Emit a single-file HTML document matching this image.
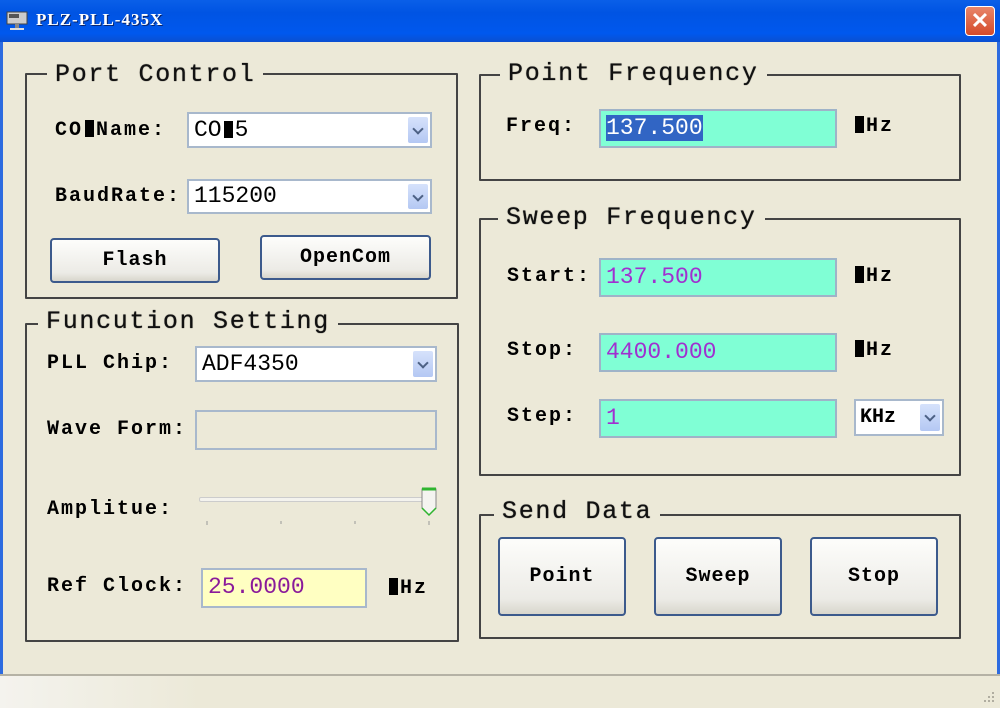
<!DOCTYPE html>
<html><head><meta charset="utf-8"><style>
*{margin:0;padding:0;box-sizing:border-box}
body{width:1000px;height:708px;overflow:hidden;background:#ECE9D8;position:relative;font-family:"Liberation Mono",monospace;font-weight:bold;color:#000}
.a{position:absolute}
.tb{left:0;top:0;width:1000px;height:42px;background:linear-gradient(#0A5FE8,#0054E3 30%,#0058EE 80%,#0A4FD0)}
.grp{position:absolute;border:2px solid #444;border-radius:1px}
.gt{position:absolute;background:#ECE9D8;font-size:25px;font-weight:normal;color:#111;padding:0 8px;letter-spacing:1.7px;line-height:28px;font-family:"Liberation Mono",monospace;text-shadow:0 0 0.8px #000}
.lb{position:absolute;font-size:20px;letter-spacing:2px;line-height:24px}
.box{position:absolute;border:2px solid #A8B8CC;background:#fff;font-size:23px;padding-left:5px;font-weight:normal}
.cy{background:#80FFD5;color:#A030D0;border-color:#9FB3C8}
.dd{position:absolute;right:2px;top:3px;bottom:3px;width:20px;background:linear-gradient(#D6E2FB,#B4C8F3);border-radius:2px}
.dd:after{content:"";position:absolute;left:6px;top:8px;width:6px;height:6px;border-right:2px solid #4D6185;border-bottom:2px solid #4D6185;transform:rotate(45deg)}
.btn{position:absolute;border:2px solid #3C5A8C;border-radius:4px;background:linear-gradient(#FDFDFB,#ECEBE6 80%,#D8D6CC);font-size:20px;text-align:center;letter-spacing:1px}
.m{display:inline-block;width:9px;height:17px;background:#000;color:transparent;overflow:hidden;vertical-align:-2px;margin:0 2px}
</style></head><body>
<div class="a tb"></div>
<svg class="a" style="left:6px;top:11px" width="24" height="22"><rect x="1" y="1" width="20" height="12" fill="#ccc" stroke="#444"/><rect x="3" y="3" width="10" height="4" fill="#555"/><rect x="9" y="13" width="4" height="4" fill="#888"/><rect x="4" y="17" width="14" height="2" fill="#ddd"/></svg>
<div class="a" style="left:36px;top:10px;color:#fff;font-size:17px;font-family:'Liberation Serif',serif;font-weight:bold;letter-spacing:1px;text-shadow:1px 1px 0 #0a246a">PLZ-PLL-435X</div>
<div class="a" style="left:965px;top:6px;width:30px;height:30px;border:1px solid #fff;border-radius:4px;background:linear-gradient(#E8866A,#D54A2A);color:#fff;font:bold 22px 'Liberation Sans',sans-serif;text-align:center;line-height:28px">✕</div>
<div class="a" style="left:0;top:42px;width:3px;height:633px;background:#2D6BE0"></div>
<div class="a" style="left:997px;top:42px;width:3px;height:633px;background:#2D6BE0"></div>

<!-- Port Control -->
<div class="grp" style="left:25px;top:73px;width:433px;height:226px"></div>
<div class="gt" style="left:47px;top:61px">Port Control</div>
<div class="lb" style="left:55px;top:119px">CO<span class="m">M</span>Name:</div>
<div class="box" style="left:187px;top:112px;width:245px;height:36px;line-height:32px">CO<span class="m">M</span>5<div class="dd"></div></div>
<div class="lb" style="left:55px;top:185px">BaudRate:</div>
<div class="box" style="left:187px;top:179px;width:245px;height:35px;line-height:31px">115200<div class="dd"></div></div>
<div class="btn" style="left:50px;top:238px;width:170px;height:45px;line-height:41px">Flash</div>
<div class="btn" style="left:260px;top:235px;width:171px;height:45px;line-height:41px">OpenCom</div>

<!-- Funcution Setting -->
<div class="grp" style="left:25px;top:323px;width:434px;height:319px"></div>
<div class="gt" style="left:38px;top:308px">Funcution Setting </div>
<div class="lb" style="left:47px;top:352px">PLL Chip:</div>
<div class="box" style="left:195px;top:346px;width:242px;height:36px;line-height:32px">ADF4350<div class="dd"></div></div>
<div class="lb" style="left:47px;top:418px">Wave Form:</div>
<div class="box" style="left:195px;top:410px;width:242px;height:40px;background:#ECE9D8"></div>
<div class="lb" style="left:47px;top:498px">Amplitue:</div>
<div class="a" style="left:199px;top:497px;width:232px;height:5px;border:1px solid #ccc;border-radius:2px;background:#F4F3EE"></div>
<svg class="a" style="left:200px;top:486px" width="240" height="45"><path d="M222 3h14v19l-7 7-7-7z" fill="#F4F4F0" stroke="#888"/><path d="M222 3h14" stroke="#2FB52F" stroke-width="3"/><path d="M222 22l7 7 7-7" fill="none" stroke="#2FB52F" stroke-width="1.5"/><path d="M7 35v4M81 35v3M155 35v3M229 35v4" stroke="#999"/></svg>
<div class="lb" style="left:47px;top:575px">Ref Clock:</div>
<div class="box" style="left:201px;top:568px;width:166px;height:40px;background:#FFFFC2;color:#8A1A9A;line-height:34px">25.0000</div>
<div class="lb" style="left:387px;top:577px"><span class="m">M</span>Hz</div>

<!-- Point Frequency -->
<div class="grp" style="left:479px;top:74px;width:482px;height:107px"></div>
<div class="gt" style="left:500px;top:60px">Point Frequency </div>
<div class="lb" style="left:506px;top:115px">Freq:</div>
<div class="box cy" style="left:599px;top:109px;width:238px;height:39px;line-height:35px"><span style="background:#3165C4;color:#fff">137.500</span></div>
<div class="lb" style="left:853px;top:115px"><span class="m">M</span>Hz</div>

<!-- Sweep Frequency -->
<div class="grp" style="left:479px;top:218px;width:482px;height:258px"></div>
<div class="gt" style="left:498px;top:204px">Sweep Frequency </div>
<div class="lb" style="left:507px;top:265px">Start:</div>
<div class="box cy" style="left:599px;top:258px;width:238px;height:39px;line-height:35px">137.500</div>
<div class="lb" style="left:853px;top:265px"><span class="m">M</span>Hz</div>
<div class="lb" style="left:507px;top:339px">Stop:</div>
<div class="box cy" style="left:599px;top:333px;width:238px;height:39px;line-height:35px">4400.000</div>
<div class="lb" style="left:853px;top:339px"><span class="m">M</span>Hz</div>
<div class="lb" style="left:507px;top:405px">Step:</div>
<div class="box cy" style="left:599px;top:399px;width:238px;height:39px;line-height:35px">1</div>
<div class="box" style="left:854px;top:399px;width:90px;height:37px;font-weight:bold;font-size:20px;padding-left:4px;line-height:33px">KHz<div class="dd"></div></div>

<!-- Send Data -->
<div class="grp" style="left:479px;top:514px;width:482px;height:125px"></div>
<div class="gt" style="left:494px;top:498px">Send Data </div>
<div class="btn" style="left:498px;top:537px;width:128px;height:79px;line-height:75px">Point</div>
<div class="btn" style="left:654px;top:537px;width:128px;height:79px;line-height:75px">Sweep</div>
<div class="btn" style="left:810px;top:537px;width:128px;height:79px;line-height:75px">Stop</div>

<div class="a" style="left:0;top:674px;width:1000px;height:34px;border-top:2px solid #B5B2A5;background:linear-gradient(90deg,#F4F3EE,#ECE9D8 20%)"></div>
<svg class="a" style="left:978px;top:688px" width="20" height="20"><g fill="#B0ADA0"><rect x="14" y="4" width="2" height="2"/><rect x="10" y="8" width="2" height="2"/><rect x="14" y="8" width="2" height="2"/><rect x="6" y="12" width="2" height="2"/><rect x="10" y="12" width="2" height="2"/><rect x="14" y="12" width="2" height="2"/></g></svg>
</body></html>
